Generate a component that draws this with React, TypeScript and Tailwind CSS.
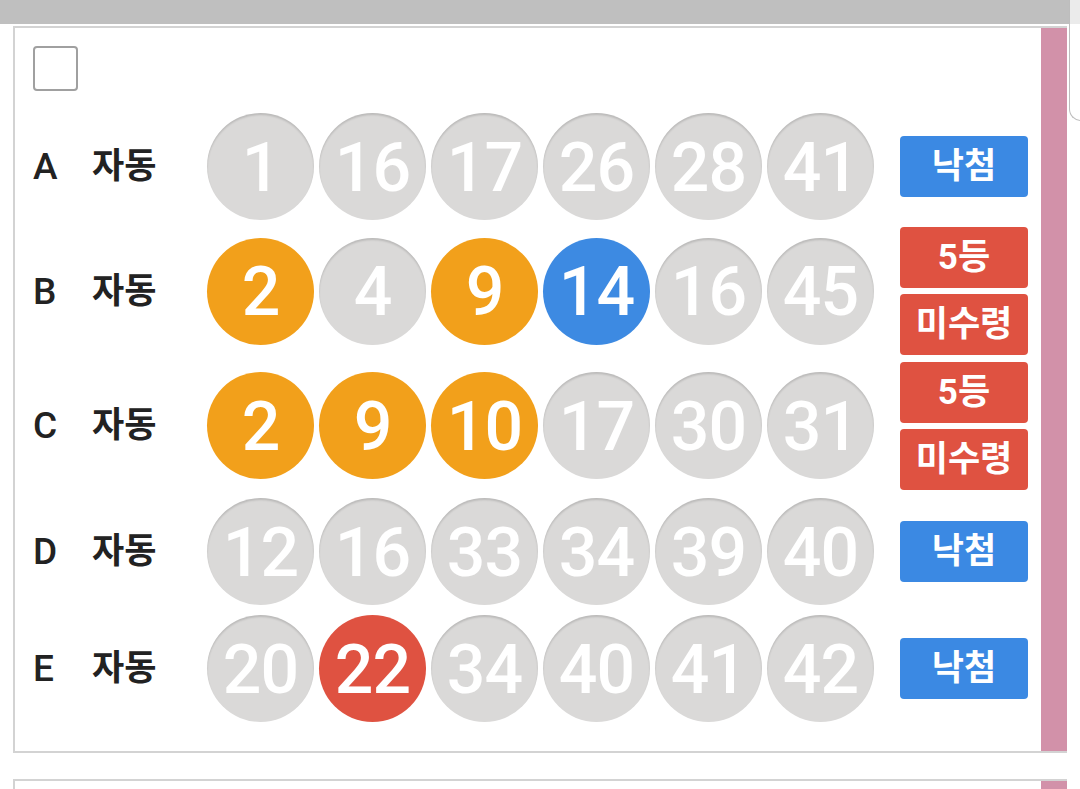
import React from "react";

type Ball = { n: number; c: "g" | "o" | "b" | "r" };
type Row = { label: string; balls: Ball[]; badges: { t: string; c: "b" | "r" }[]; mt: string; h: string };

const g = (n: number): Ball => ({ n, c: "g" });
const o = (n: number): Ball => ({ n, c: "o" });

const rows: Row[] = [
  { label: "A", balls: [g(1), g(16), g(17), g(26), g(28), g(41)], badges: [{ t: "낙첨", c: "b" }], mt: "mt-[22px]", h: "h-[107px]" },
  { label: "B", balls: [o(2), g(4), o(9), { n: 14, c: "b" }, g(16), g(45)], badges: [{ t: "5등", c: "r" }, { t: "미수령", c: "r" }], mt: "mt-[7px]", h: "h-[128px]" },
  { label: "C", balls: [o(2), o(9), o(10), g(17), g(30), g(31)], badges: [{ t: "5등", c: "r" }, { t: "미수령", c: "r" }], mt: "mt-[7px]", h: "h-[127px]" },
  { label: "D", balls: [g(12), g(16), g(33), g(34), g(39), g(40)], badges: [{ t: "낙첨", c: "b" }], mt: "mt-[9px]", h: "h-[107px]" },
  { label: "E", balls: [g(20), { n: 22, c: "r" }, g(34), g(40), g(41), g(42)], badges: [{ t: "낙첨", c: "b" }], mt: "mt-[10px]", h: "h-[107px]" },
];

const ballCls: Record<Ball["c"], string> = {
  g: "bg-[#dad9d8] shadow-[inset_0_2px_2px_rgba(0,0,0,0.14)]",
  o: "bg-[#f2a01b]",
  b: "bg-[#3d8ae2]",
  r: "bg-[#df5241]",
};

const font = "font-['Roboto','Noto_Sans_CJK_KR',sans-serif]";

export default function App() {
  return (
    <div className={`relative w-[1080px] h-[789px] overflow-hidden bg-white ${font}`}>
      <div className="h-[24px] bg-[#bfbfbf]" />
      <div className="h-[2px] bg-white" />
      <div className="ml-[13px] w-[1054px] flex border-l-2 border-t-2 border-b-2 border-[#d3d3d3]">
        <div className="flex-1 pl-[18px] pt-[18px] pb-[29px] flex flex-col">
          <div className="w-[45px] h-[45px] border-2 border-[#a0a0a0] rounded-[4px] bg-white" />
          {rows.map((r) => (
            <div key={r.label} className={`flex items-center ${r.mt} ${r.h}`}>
              <span className="w-[59px] text-[37px] font-medium text-[#222] leading-none">{r.label}</span>
              <span className="w-[115px] text-[35px] font-bold text-[#222] leading-none">자동</span>
              <div className="flex gap-[5px]">
                {r.balls.map((b, i) => (
                  <div
                    key={i}
                    className={`w-[107px] h-[107px] rounded-full flex items-center justify-center text-white text-[68px] font-medium leading-none tracking-[-1px] pt-[2px] ${ballCls[b.c]}`}
                  >
                    {b.n}
                  </div>
                ))}
              </div>
              <div className="ml-[26px] flex flex-col gap-[6px]">
                {r.badges.map((bd, i) => (
                  <div
                    key={i}
                    className={`w-[128px] h-[61px] rounded-[4px] flex items-center justify-center text-white text-[35px] font-bold leading-none ${bd.c === "b" ? "bg-[#3b89e3]" : "bg-[#df5241]"}`}
                  >
                    {bd.t}
                  </div>
                ))}
              </div>
            </div>
          ))}
        </div>
        <div className="w-[26px] bg-[#d291a9]" />
      </div>
      <div className="mt-[26px] ml-[13px] w-[1054px] h-[40px] flex border-l-2 border-t-2 border-[#d3d3d3]">
        <div className="flex-1" />
        <div className="w-[26px] bg-[#d291a9]" />
      </div>
      <div className="absolute left-[1069px] top-[-2px] w-[40px] h-[123px] border-l-[1.5px] border-b-[1.5px] border-[#bdbdbd] rounded-bl-[12px] bg-white overflow-hidden">
        <div className="h-[26px] bg-[#ebebeb]" />
      </div>
    </div>
  );
}
